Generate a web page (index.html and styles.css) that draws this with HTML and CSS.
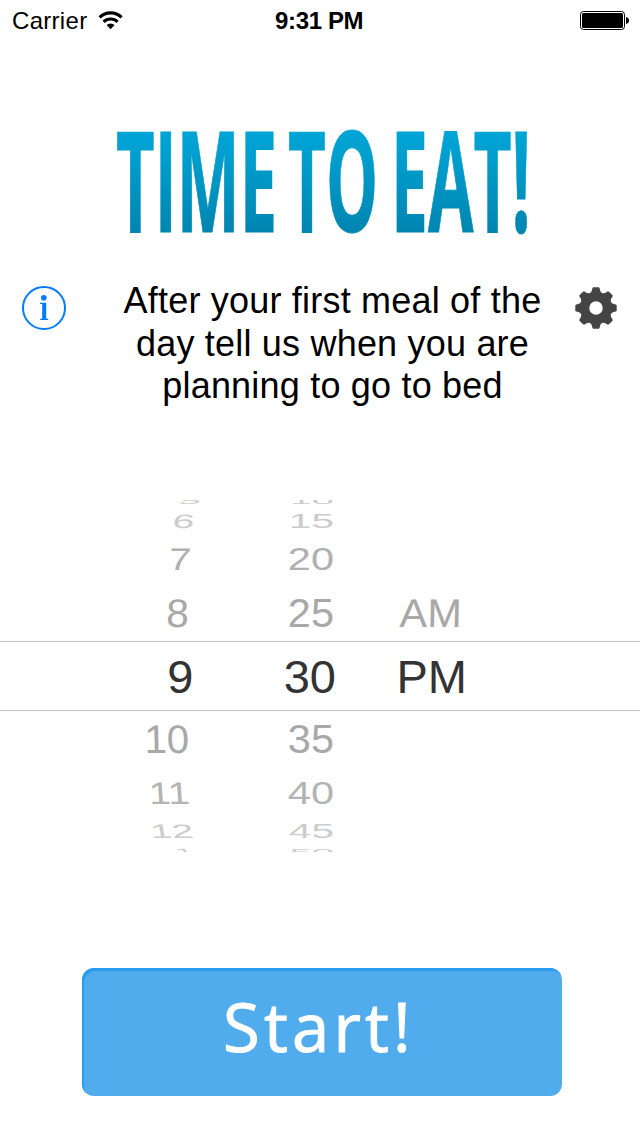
FILE: index.html
```
<!DOCTYPE html>
<html lang="en">
<head>
<meta charset="utf-8">
<title>Time to Eat!</title>
<link rel="stylesheet" href="styles.css">
</head>
<body>
<main class="screen">
  <header class="status">
    <div class="status-left">
      <span class="carrier">Carrier</span>
      <svg class="wifi" width="26" height="20" viewBox="0 0 26 20">
        <path d="M1.600 6.300A16 16 0 0 1 23.600 6.300" fill="none" stroke="#000" stroke-width="3.200"/>
        <path d="M5.600 10.800A10.200 10.200 0 0 1 19.600 10.800" fill="none" stroke="#000" stroke-width="3.200"/>
        <path d="M8.600 14.100A5.800 5.800 0 0 1 16.600 14.100L12.600 18.300Z"/>
      </svg>
    </div>
    <span class="clock">9:31 PM</span>
    <svg class="battery" width="50" height="20" viewBox="0 0 50 20">
      <rect x=".5" y=".5" width="44" height="18" rx="3" fill="none" stroke="#000"/>
      <rect x="2" y="2" width="41" height="15" rx="1.5"/>
      <path d="M46 6c2 .4 3 1.700 3 3.500s-1 3.100-3 3.500z"/>
    </svg>
  </header>

  <h1 class="title">
    <svg width="640" height="130" viewBox="0 115 640 130">
      <defs>
        <linearGradient id="ink" gradientUnits="userSpaceOnUse" x1="0" y1="131" x2="0" y2="232">
          <stop offset="0" stop-color="#00a4d6"/>
          <stop offset=".2" stop-color="#00a0d0"/>
          <stop offset="1" stop-color="#0085b0"/>
        </linearGradient>
      </defs>
      <g class="title-text" fill="url(#ink)" stroke="url(#ink)">
        <text x="116" y="231.500" textLength="161" lengthAdjust="spacingAndGlyphs">TIME</text>
        <text x="288" y="231.500" textLength="90" lengthAdjust="spacingAndGlyphs">TO</text>
        <text x="391" y="231.500" textLength="139.500" lengthAdjust="spacingAndGlyphs">EAT!</text>
      </g>
    </svg>
  </h1>

  <section class="intro">
    <svg class="info" width="44" height="44" viewBox="0 0 44 44" fill="#007aff">
      <circle cx="22" cy="22" r="21" fill="none" stroke="#007aff" stroke-width="2"/>
      <circle cx="21.800" cy="11.700" r="2.800"/>
      <path d="M18 16.800h6.200v16h2v1.200h-8v-1.200h2V18h-2.200z"/>
    </svg>
    <p class="message">After your first meal of the<br>day tell us when you are<br>planning to go to bed</p>
    <svg class="gear" width="44" height="44" viewBox="-22 -22 44 44" fill="#444">
      <defs><path id="tooth" d="M-7-13C-5-15.500-4.200-16.500-3.600-19.800Q-3.400-20.700-2.400-20.700H2.400Q3.400-20.700 3.600-19.800C4.200-16.500 5-15.500 7-13z"/></defs>
      <circle r="11.500" fill="none" stroke="#444" stroke-width="9.500"/>
      <use href="#tooth"/><use href="#tooth" transform="rotate(45)"/><use href="#tooth" transform="rotate(90)"/><use href="#tooth" transform="rotate(135)"/>
      <use href="#tooth" transform="rotate(180)"/><use href="#tooth" transform="rotate(225)"/><use href="#tooth" transform="rotate(270)"/><use href="#tooth" transform="rotate(315)"/>
    </svg>
  </section>

  <section class="picker">
    <svg width="640" height="352" viewBox="0 500 640 352">
      <g class="drum" text-anchor="end">
        <g fill="#ccc">
          <text transform="matrix(.9 0 -.25 .22 198 503.500)">5</text>
          <text transform="matrix(.95 0 -.08 .47 193.500 528)">6</text>
        </g>
        <text fill="#b0b0b0" transform="matrix(.97 0 -.05 .75 190.500 570)">7</text>
        <text fill="#a8a8a8" transform="matrix(.98 0 -.02 .96 188.500 627)">8</text>
        <text fill="#a8a8a8" transform="matrix(.97 0 .02 .96 189.500 753)">10</text>
        <text fill="#b4b4b4" transform="matrix(.95 0 .05 .75 190.500 804)">11</text>
        <text fill="#ccc" transform="matrix(.93 0 .08 .47 194.500 838)">12</text>
        <text fill="#ccc" transform="matrix(.8 0 .2 .22 197 855)">1</text>
        <g fill="#ccc">
          <text transform="matrix(.96 0 0 .22 334 503.500)">10</text>
          <text transform="matrix(.98 0 0 .47 334 528)">15</text>
          <text transform="matrix(.98 0 0 .47 334 838)">45</text>
          <text transform="matrix(.96 0 0 .22 334 855)">50</text>
        </g>
        <text fill="#b0b0b0" transform="matrix(1 0 0 .75 334 570)">20</text>
        <text fill="#a8a8a8" transform="matrix(1 0 0 .96 334 627)">25</text>
        <text fill="#a8a8a8" transform="matrix(1 0 0 .96 334 753)">35</text>
        <text fill="#b4b4b4" transform="matrix(1 0 0 .75 334 804)">40</text>
        <text fill="#a8a8a8" transform="matrix(1 0 -.02 .96 461.500 627)">AM</text>
      </g>
      <path d="M0 641.500H640M0 710.500H640" stroke="#c8c8c8"/>
      <g class="chosen" text-anchor="end">
        <text x="193.500" y="693">9</text>
        <text x="336" y="693">30</text>
        <text x="467" y="693">PM</text>
      </g>
    </svg>
  </section>

  <button class="start" type="button"><span>Start!</span></button>
</main>
</body>
</html>
```
FILE: styles.css
```
* { box-sizing: border-box; }
body { margin: 0; background: #fff; }
svg { display: block; flex: none; overflow: visible; }
.screen {
  width: 640px;
  height: 1136px;
  overflow: hidden;
  display: flex;
  flex-direction: column;
  background: #fff;
  color: #000;
  font-family: "Liberation Sans", Arial, sans-serif;
}
.status {
  height: 40px;
  padding: 1px 10px 0 12px;
  display: grid;
  grid-template-columns: 1fr 90px 1fr;
  align-items: center;
  font-size: 24px;
}
.status-left { display: flex; align-items: center; gap: 11px; }
.carrier { letter-spacing: .3px; }
.clock { margin-left: -1px; font-weight: bold; letter-spacing: -.35px; white-space: nowrap; }
.battery { justify-self: end; }
.title { margin: 75px 0 0; height: 130px; }
.title-text { font: bold 140px "Open Sans", "Noto Sans", sans-serif; stroke-width: 1px; }
.intro {
  margin-top: 35px;
  height: 135px;
  padding: 0 22px;
  display: flex;
}
.info { margin-top: 6px; }
.gear { margin-top: 6px; }
.message {
  width: 508px;
  margin: 0;
  padding-left: 25px;
  font-size: 36px;
  line-height: 42.500px;
  letter-spacing: .2px;
  text-align: center;
  white-space: nowrap;
}
.picker { margin-top: 85px; height: 352px; overflow: hidden; }
.drum { font-size: 41.500px; }
.chosen { font-size: 47px; fill: #333; }
.start {
  width: 480px;
  height: 128px;
  margin: 116px 0 0 82px;
  padding: 0;
  border: 0;
  border-radius: 12px;
  background: #51acee;
  box-shadow: inset 2px 3px 0 #2b9bed;
  color: #fff;
  font: 67px "Open Sans", "Noto Sans", sans-serif;
  letter-spacing: 4.200px;
  -webkit-text-stroke: 1px #fff;
}
.start span { display: block; margin: -13px 6px 0 0; }
```
